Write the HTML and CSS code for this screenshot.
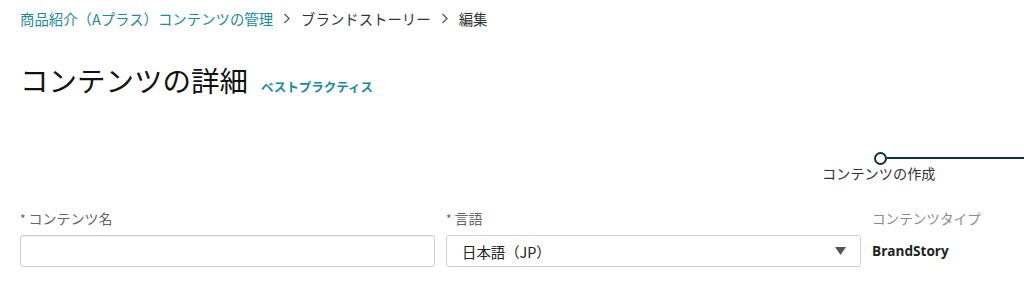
FILE: index.html
```html
<!DOCTYPE html>
<html lang="ja">
<head>
<meta charset="utf-8">
<link rel="stylesheet" href="styles.css">
</head>
<body>
<div class="page">
  <nav class="crumbs">
    <a class="crumb-link">商品紹介（Aプラス）コンテンツの管理</a>
    <svg class="sep" width="8" height="11" viewBox="0 0 8 11"><path d="M1.5 1L6 5.5L1.5 10" fill="none" stroke="#666" stroke-width="1.5"/></svg>
    <span class="crumb">ブランドストーリー</span>
    <svg class="sep" width="8" height="11" viewBox="0 0 8 11"><path d="M1.5 1L6 5.5L1.5 10" fill="none" stroke="#666" stroke-width="1.5"/></svg>
    <span class="crumb">編集</span>
  </nav>
  <div class="title-row">
    <h1 class="title">コンテンツの詳細</h1>
    <a class="best">ベストプラクティス</a>
  </div>
  <div class="stepper">
    <div class="step">
      <div class="step-track"><span class="dot"></span><span class="line"></span></div>
      <div class="step-label">コンテンツの作成</div>
    </div>
  </div>
  <div class="form-row">
    <div class="field">
      <label class="label"><span class="req">*</span>コンテンツ名</label>
      <div class="input"></div>
    </div>
    <div class="field">
      <label class="label"><span class="req">*</span>言語</label>
      <div class="input select">
        <span class="sel-text">日本語（JP）</span>
        <svg class="arrow" width="11" height="8" viewBox="0 0 11 8"><path d="M0 0H11L5.5 8Z" fill="#555"/></svg>
      </div>
    </div>
    <div class="field type">
      <div class="label light">コンテンツタイプ</div>
      <div class="type-value">BrandStory</div>
    </div>
  </div>
</div>
</body>
</html>
```

FILE: styles.css
```css
* { box-sizing: border-box; }
html, body { margin: 0; padding: 0; background: #fff; overflow: hidden; }
body {
  font-family: "Noto Sans CJK JP", "Noto Sans", sans-serif;
  color: #111;
}
.page { padding: 0 0 0 20px; width: 1024px; height: 301px; }
.crumbs {
  display: flex;
  align-items: center;
  height: 36px;
  font-size: 14.4px;
}
.crumb-link { color: #20899b; }
.crumb { color: #333; }
.sep { display: block; margin: 0 10px 0 10px; }
.title-row {
  display: flex;
  align-items: baseline;
  margin-top: 24px;
  height: 40px;
}
.title {
  font-size: 28.5px;
  font-weight: 400;
  margin: 0;
  line-height: 40px;
  color: #111;
}
.best {
  margin-left: 13px;
  font-size: 12.5px;
  font-weight: 700;
  color: #168a9b;
}
.stepper {
  display: flex;
  justify-content: flex-end;
  margin-top: 51px;
  height: 35px;
}
.step { width: 202px; display: flex; flex-direction: column; }
.step-track { display: flex; align-items: center; padding-left: 52px; height: 14px; }
.dot {
  width: 13px; height: 13px;
  border: 2px solid #0e3239;
  border-radius: 50%;
  flex: none;
}
.line { flex: 1; height: 2px; background: #0e3239; }
.step-label { font-size: 14.2px; color: #333; line-height: 18px; margin-top: -1px; }
.form-row {
  display: grid;
  grid-template-columns: 415px 415px 1fr;
  column-gap: 11px;
  margin-top: 22px;
}
.label {
  display: block;
  font-size: 14px;
  color: #666;
  line-height: 20px;
  height: 27px;
}
.label.light { color: #8a8a8a; font-size: 13.6px; }
.req { font-size: 12px; margin-right: 3px; position: relative; top: 0; color: #666; }
.input {
  height: 32px;
  border: 1px solid #c9cfd1;
  border-radius: 3px;
  box-shadow: inset 0 1px 1px rgba(0,0,0,0.06);
  background: #fff;
}
.select {
  display: flex;
  align-items: center;
  justify-content: space-between;
  padding: 0 14px 0 15px;
  box-shadow: none;
  border-color: #ccd3d5;
}
.sel-text { font-size: 14.4px; color: #222; }
.arrow { display: block; }
.type-value {
  font-family: "Open Sans", "Noto Sans CJK JP", sans-serif;
  font-weight: 700;
  font-size: 13.6px;
  color: #222;
  line-height: 32px;
}
```
